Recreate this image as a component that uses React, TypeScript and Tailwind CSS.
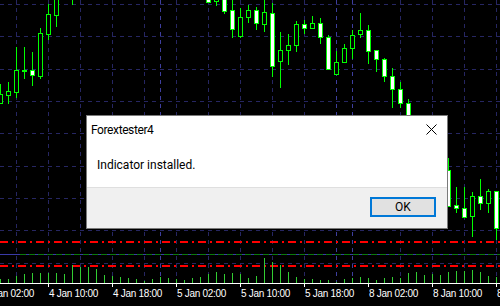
// x, high, low, bodyTop, bodyBottom, bearish (white body)
type Candle = [number, number, number, number, number, boolean];

const candles: Candle[] = [
  [0, 84, 103, 94, 103, false],
  [8, 82, 103, 91, 95, false],
  [16, 47, 97, 70, 92, false],
  [24, 47, 78, 70, 70, false],
  [32, 52, 85, 70, 75, true],
  [40, 28, 78, 33, 76, false],
  [48, 4, 39, 14, 34, false],
  [56, -8, 26, -6, 15, false],
  [72, -12, 4, -10, -4, false],
  [208, -12, 2, -6, 2, true],
  [216, -12, 5, -6, 1, false],
  [224, -12, 13, -6, 11, true],
  [232, 0, 37, 10, 29, true],
  [240, 8, 37, 17, 36, false],
  [248, 5, 22, 10, 17, false],
  [256, 7, 29, 10, 23, true],
  [264, -3, 31, 12, 24, false],
  [272, 3, 76, 13, 66, true],
  [280, 32, 87, 50, 61, false],
  [288, 34, 64, 45, 50, false],
  [296, 21, 51, 24, 45, false],
  [304, 20, 33, 24, 28, true],
  [312, 16, 28, 23, 28, false],
  [320, 18, 43, 23, 37, true],
  [328, 35, 69, 37, 69, true],
  [336, 51, 74, 62, 74, false],
  [344, 44, 62, 48, 62, false],
  [352, 30, 58, 35, 48, false],
  [360, 13, 37, 30, 34, false],
  [368, 25, 63, 30, 51, true],
  [376, 50, 71, 50, 59, true],
  [384, 58, 81, 59, 76, true],
  [392, 68, 107, 76, 89, true],
  [400, 82, 107, 89, 103, true],
  [408, 99, 135, 103, 130, true],
  [448, 158, 206, 170, 206, true],
  [456, 187, 212, 205, 208, true],
  [464, 187, 217, 208, 217, true],
  [472, 192, 236, 196, 216, false],
  [480, 179, 209, 196, 203, true],
  [488, 189, 212, 191, 203, false],
  [496, 191, 239, 191, 228, true],
];

const volumes = [
  4, 4, 7, 9, 10, 10, 10, 10, 9, 18, 16, 16, 14, 8, 7, 6, 5, 4, 2, 4, 6, 5, 4,
  3, 5, 6, 9, 11, 9, 10, 9, 5, 7, 25, 21, 18, 11, 6, 4, 4, 3, 3, 1, 4, 5, 6, 5,
  3, 5, 6, 5, 10, 11, 8, 9, 8, 11, 12, 12, 13, 11, 7, 6,
];

const gridRows = [4, 36, 69, 101, 133, 166, 198, 230, 263];
const gridCols = [16, 48, 80, 112, 144, 176, 208, 240, 272, 304, 400, 432, 464, 496];
const daySeparators = [160, 336, 352];

const timeLabels = [
  "4 Jan 02:00",
  "4 Jan 10:00",
  "4 Jan 18:00",
  "5 Jan 02:00",
  "5 Jan 10:00",
  "5 Jan 18:00",
  "8 Jan 02:00",
  "8 Jan 10:00",
  "8 Jan 18:00",
];

function Chart() {
  return (
    <svg width={500} height={306} className="block" shapeRendering="crispEdges">
      {/* grid */}
      {gridRows.map((y) => (
        <line key={`h${y}`} x1={0} x2={500} y1={y + 0.5} y2={y + 0.5} stroke="#262662" strokeDasharray="4 4" />
      ))}
      {gridCols.map((x) => (
        <line key={`v${x}`} x1={x + 0.5} x2={x + 0.5} y1={0} y2={283} stroke="#262662" strokeDasharray="4 4" />
      ))}
      {daySeparators.map((x) => (
        <line key={`d${x}`} x1={x + 0.5} x2={x + 0.5} y1={0} y2={283} stroke="#3e3e9e" strokeDasharray="4 4" />
      ))}

      {/* indicator lines */}
      <line x1={0} x2={500} y1={242} y2={242} stroke="#ff0000" strokeWidth={2} strokeDasharray="8 4 2 4" />
      <line x1={0} x2={500} y1={266} y2={266} stroke="#ff0000" strokeWidth={2} strokeDasharray="8 4 2 4" />
      <line x1={0} x2={500} y1={254.5} y2={254.5} stroke="#3a3aa8" />
      <line x1={20} x2={500} y1={254.5} y2={254.5} stroke="#0b7a0b" strokeDasharray="6 3" />

      {/* volume */}
      {volumes.map((h, i) => (
        <rect key={`vol${i}`} x={i * 8} y={283 - h} width={1} height={h} fill="#32cd32" />
      ))}

      {/* candles */}
      {candles.map(([x, high, low, top, bottom, bear]) => (
        <g key={`c${x}`}>
          <line x1={x + 0.5} x2={x + 0.5} y1={high} y2={low + 1} stroke="#00ff00" />
          <rect
            x={x - 1.5}
            y={top + 0.5}
            width={4}
            height={Math.max(bottom - top, 1)}
            fill={bear ? "#ffffff" : "#000000"}
            stroke="#00ff00"
          />
        </g>
      ))}

      {/* time axis */}
      <line x1={0} x2={500} y1={283.5} y2={283.5} stroke="#ffffff" />
      {timeLabels.map((label, i) => {
        const tick = -16 + i * 64;
        return (
          <g key={label}>
            <line x1={tick + 0.5} x2={tick + 0.5} y1={283} y2={287} stroke="#ffffff" />
            <text
              x={tick + 1}
              y={297}
              fill="#ffffff"
              fontSize={10}
              letterSpacing={-0.3}
              fontFamily="'Liberation Sans', Arial, sans-serif"
              shapeRendering="auto"
            >
              {label}
            </text>
          </g>
        );
      })}
    </svg>
  );
}

function MessageBox() {
  return (
    <div className="absolute left-[86px] top-[115px] flex h-[114px] w-[362px] flex-col border border-[#7a7a7a] bg-white font-['Roboto',sans-serif] text-[12px] text-black">
      <div className="flex h-[27px] items-center justify-between pl-[4px] pr-[10px]">
        <span className="tracking-[-0.4px]">Forextester4</span>
        <svg width={11} height={11} viewBox="0 0 11 11" className="block">
          <path d="M0.5 0.5 L10.5 10.5 M10.5 0.5 L0.5 10.5" stroke="#000" strokeWidth={1} fill="none" />
        </svg>
      </div>
      <div className="flex flex-1 items-center pl-[10px]">
        <span>Indicator installed.</span>
      </div>
      <div className="flex h-[41px] items-end justify-end border-t border-[#dfdfdf] bg-[#f0f0f0] pb-[11px] pr-[11px]">
        <button className="flex h-[20px] w-[66px] items-center justify-center border-2 border-[#0078d7] bg-[#e1e1e1] text-[12px] leading-none">
          OK
        </button>
      </div>
    </div>
  );
}

export default function App() {
  return (
    <div className="relative h-[306px] w-[500px] overflow-hidden bg-black">
      <Chart />
      <MessageBox />
    </div>
  );
}
